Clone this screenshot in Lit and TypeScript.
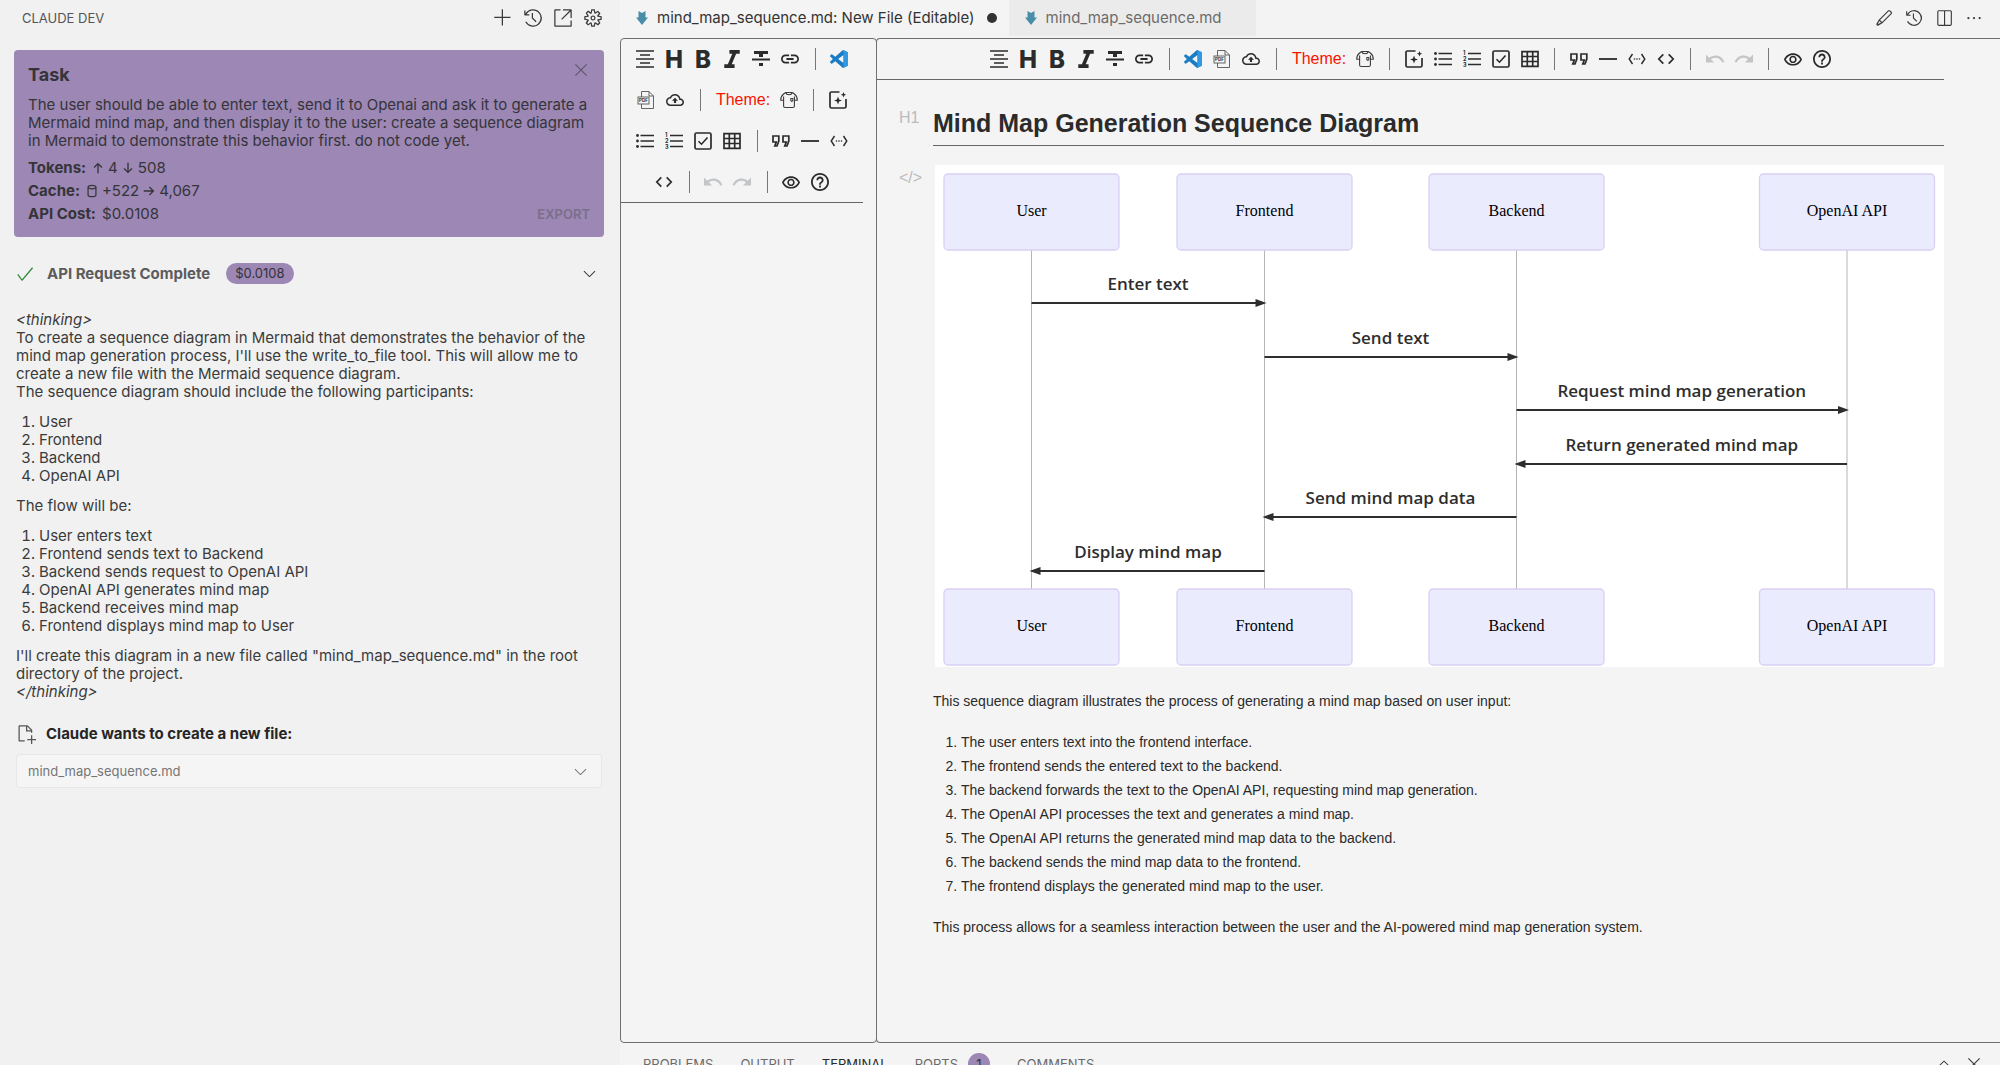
import { LitElement, html, svg, css, nothing } from "lit";
import type { SVGTemplateResult, TemplateResult } from "lit";
import { customElement, property } from "lit/decorators.js";
import { classMap } from "lit/directives/class-map.js";

/* ---------- icons ---------- */

const icon = (
  box: string,
  body: SVGTemplateResult,
  cls = "icon"
): TemplateResult => html`<svg class=${cls} viewBox=${box} aria-hidden="true" fill="currentColor">${body}</svg>`;

const glyph = (d: string) => svg`<path fill-rule="evenodd" d=${d} />`;
const line = (d: string, w = 1) =>
  svg`<path d=${d} fill="none" stroke="currentColor" stroke-width=${w} />`;

const codicons = {
  add: glyph("M14 7v1H8v6H7V8H1V7h6V1h1v6h6z"),
  history: glyph(
    "M13.507 12.324a7 7 0 0 0 .065-8.56A7 7 0 0 0 2 4.393V2H1v3.5l.5.5H5V5H2.811a6.008 6.008 0 1 1-.135 5.77l-.887.462a7 7 0 0 0 11.718 1.092zm-3.361-.97l.708-.707L8 7.792V4H7v4l.146.354 3 3z"
  ),
  external: glyph(
    "M1.5 1H6v1H2v12h12v-4h1v4.5l-.5.5h-13l-.5-.5v-13l.5-.5zM15 1.5V8h-1V2.707L7.243 9.465l-.707-.708L13.293 2H8V1h6.5l.5.5z"
  ),
  gear: glyph(
    "M9.1 4.4L8.6 2H7.4l-.5 2.4-.7.3-2-1.3-.9.8 1.3 2-.2.7-2.4.5v1.2l2.4.5.3.8-1.3 2 .8.8 2-1.3.8.3.4 2.3h1.2l.5-2.4.8-.3 2 1.3.8-.8-1.3-2 .3-.8 2.3-.4V7.4l-2.4-.5-.3-.8 1.3-2-.8-.8-2 1.3-.7-.2zM9.4 1l.5 2.4L12 2.1l2 2-1.4 2.1 2.4.4v2.8l-2.4.5L14 12l-2 2-2.1-1.4-.5 2.4H6.6l-.5-2.4L4 13.9l-2-2 1.4-2.1L1 9.4V6.6l2.4-.5L2.1 4l2-2 2.1 1.4.4-2.4h2.8zm.6 7c0 1.1-.9 2-2 2s-2-.9-2-2 .9-2 2-2 2 .9 2 2zM8 9c.6 0 1-.4 1-1s-.4-1-1-1-1 .4-1 1 .4 1 1 1z"
  ),
  close: line("M3 3l10 10M13 3L3 13", 1),
  check: glyph(
    "M14.431 3.323l-8.47 10-.79-.036-3.35-4.77.818-.574 2.978 4.24 8.051-9.506.764.646z"
  ),
  down: glyph(
    "M7.976 10.072l4.357-4.357.62.618L8.284 11h-.618L3 6.333l.619-.618 4.357 4.357z"
  ),
  up: glyph(
    "M8.024 5.928l-4.357 4.357-.62-.618L7.716 5h.618L13 9.667l-.619.618-4.357-4.357z"
  ),
  newFile: glyph(
    "M9.5 1.1l3.4 3.5.1.4v2h-1V6H8V2H3v11h4v1H2.5l-.5-.5v-12l.5-.5h6.7l.3.1zM9 2v3h2.9L9 2zm4 14h-1v-3H9v-1h3V9h1v3h3v1h-3v3z"
  ),
  edit: glyph(
    "M13.23 1h-1.46L3.52 9.25l-.16.22L1 13.59 2.41 15l4.12-2.36.22-.16L15 4.23V2.77L13.23 1zM2.41 13.59l1.51-3 1.45 1.45-2.96 1.55zm3.83-2.06L4.47 9.76l8-8 1.77 1.77-8 8z"
  ),
  split: glyph("M14 1H3L2 2v12l1 1h11l1-1V2l-1-1zM8 14H3V2h5v12zm6 0H9V2h5v12z"),
  more: svg`<circle cx="3" cy="8" r="1" /><circle cx="8" cy="8" r="1" /><circle cx="13" cy="8" r="1" />`,
  arrowUp: line("M8 14V3M3.5 7.5L8 3l4.5 4.5", 1.5),
  arrowDown: line("M8 2v11M3.5 8.5L8 13l4.5-4.5", 1.5),
  arrowRight: line("M2 8h11M8.5 3.5L13 8l-4.5 4.5", 1.5),
  database: svg`<path d="M3.5 4v8.5c0 1.1 1.6 2 4.5 2s4.5-.9 4.5-2V4" fill="none" stroke="currentColor" stroke-width="1.4" /><ellipse cx="8" cy="3.5" rx="4.5" ry="2" fill="none" stroke="currentColor" stroke-width="1.4" />`,
};

const codicon = (name: keyof typeof codicons, cls = "icon") =>
  icon("0 0 16 16", codicons[name], cls);

const markdownIcon = icon(
  "0 0 12 14",
  svg`<path d="M2.5 0L6 2 9.500 0V6.500H12L6 14 0 6.500H2.500z" />`,
  "file-icon"
);

const tools: Record<string, { label: string; box: string; body: SVGTemplateResult }> = {
  outline: {
    label: "Outline",
    box: "0 0 18 18",
    body: line("M0 1h18M4 5h10M0 9h18M4 13h10M0 17h18", 1.7),
  },
  heading: {
    label: "Headings",
    box: "0 0 18 18",
    body: svg`<text x="9" y="17.5" text-anchor="middle" font-family="Inter, sans-serif" font-weight="800" font-size="24">H</text>`,
  },
  bold: {
    label: "Bold",
    box: "0 0 18 18",
    body: svg`<text x="9" y="17.5" text-anchor="middle" font-family="Inter, sans-serif" font-weight="800" font-size="24">B</text>`,
  },
  italic: {
    label: "Italic",
    box: "5 4 14 14",
    body: glyph("M10 4v3h2.21l-3.42 8H6v3h8v-3h-2.21l3.42-8H18V4z"),
  },
  strike: {
    label: "Strike",
    box: "3 3 18 18",
    body: glyph("M10 19h4v-3h-4v3zM5 4v3h5v3h4V7h5V4H5zM3 13.5h18v-2H3v2z"),
  },
  link: {
    label: "Link",
    box: "2 2 20 20",
    body: glyph(
      "M3.9 12c0-1.71 1.39-3.1 3.1-3.1h4V7H7c-2.76 0-5 2.24-5 5s2.24 5 5 5h4v-1.9H7c-1.71 0-3.1-1.39-3.1-3.1zM8 13h8v-2H8v2zm9-6h-4v1.9h4c1.71 0 3.1 1.39 3.1 3.1s-1.39 3.1-3.1 3.1h-4V17h4c2.76 0 5-2.24 5-5s-2.24-5-5-5z"
    ),
  },
  vscode: {
    label: "Open in VS Code",
    box: "0 0 24 24",
    body: svg`<path fill="#1a7cc4" d="M23.15 2.587L18.21.21a1.494 1.494 0 0 0-1.705.29l-9.46 8.63-4.12-3.128a.999.999 0 0 0-1.276.057L.327 7.261A1 1 0 0 0 .326 8.74L3.899 12 .326 15.26a1 1 0 0 0 .001 1.479L1.65 17.94a.999.999 0 0 0 1.276.057l4.12-3.128 9.46 8.63a1.492 1.492 0 0 0 1.704.29l4.942-2.377A1.5 1.5 0 0 0 24 20.06V3.939a1.5 1.5 0 0 0-.85-1.352zm-5.146 14.861L10.826 12l7.178-5.448v10.896z" /><path fill="#2f9ae3" d="M18 .2l5.15 2.387A1.5 1.5 0 0 1 24 3.939V20.06a1.5 1.5 0 0 1-.85 1.352L18 23.8z" />`,
  },
  pdf: {
    label: "Export PDF",
    box: "0 0 18 18",
    body: svg`<path d="M4.5 6V.5H12L16.5 5v12.5h-12V13M12 .5V5h4.5" fill="none" stroke="#555" stroke-width=".9" /><rect x="1" y="6" width="11" height="7" fill="none" stroke="#555" stroke-width=".9" /><text x="6.5" y="11.3" text-anchor="middle" font-family="Inter, sans-serif" font-weight="700" font-size="4.5">PDF</text>`,
  },
  upload: {
    label: "Upload",
    box: "0 0 24 24",
    body: glyph(
      "M19.35 10.04C18.67 6.59 15.64 4 12 4 9.11 4 6.6 5.64 5.35 8.04 2.34 8.36 0 10.91 0 14c0 3.31 2.69 6 6 6h13c2.76 0 5-2.24 5-5 0-2.64-2.05-4.78-4.65-4.96zM19 18H6c-2.21 0-4-1.79-4-4 0-2.05 1.53-3.76 3.56-3.97l1.07-.11.5-.95C8.08 7.14 9.94 6 12 6c2.62 0 4.88 1.86 5.39 4.43l.3 1.5 1.53.11c1.56.1 2.78 1.41 2.78 2.96 0 1.65-1.35 3-3 3zM8 13h2.55v3h2.9v-3H16l-4-4z"
    ),
  },
  theme: {
    label: "Choose theme",
    box: "0 0 18 18",
    body: svg`<path d="M5.6 1.5h6.8M5.6 1.5L3.6 3C1.6 4.500.7 6.500.7 9.300h2.900M12.400 1.500l2 1.500c2 1.500 2.900 3.500 2.900 6.300h-2.900M3.600 5.500V15q0 1.500 1.500 1.500h7.800q1.500 0 1.500-1.500V5.500M5.800 1.700c.700 2.800 5.700 2.800 6.400 0" fill="none" stroke="#3c3c3c" stroke-width="1.100" /><path d="M10.300 7h3v3l-1.500 1-1.500-1zM11.300 8v1.500h1V8z" fill="#3c3c3c" fill-rule="evenodd" />`,
  },
  sparkle: {
    label: "AI assist",
    box: "0 0 18 18",
    body: svg`<path d="M10.5 1H2.5C1.600 1 1 1.600 1 2.500v13c0 .900.600 1.500 1.500 1.500h13c.900 0 1.500-.600 1.500-1.500V8" fill="none" stroke="currentColor" stroke-width="1.7" /><path d="M9 5.500l1.100 3 2.900 1-2.900 1-1.100 3-1.100-3-2.900-1 2.900-1zM14.500 1l.800 2 1.900.800-1.900.800-.800 2-.800-2-1.900-.800 1.900-.800z" />`,
  },
  bullets: {
    label: "List",
    box: "0 0 18 18",
    body: svg`<circle cx="1.5" cy="3.5" r="1.4" /><circle cx="1.5" cy="9" r="1.4" /><circle cx="1.5" cy="14.5" r="1.4" />${line("M4.5 3.5H18M4.5 9H18M4.5 14.5H18", 1.7)}`,
  },
  numbers: {
    label: "Ordered list",
    box: "0 0 18 18",
    body: svg`${line("M5 3.5H18M5 9H18M5 14.5H18", 1.7)}<g font-family="Inter, sans-serif" font-weight="700" font-size="5.5"><text x="0" y="5">1</text><text x="0" y="11">2</text><text x="0" y="17">3</text></g>`,
  },
  task: {
    label: "Task list",
    box: "0 0 18 18",
    body: svg`<rect x="1" y="1" width="16" height="16" rx="1.5" fill="none" stroke="currentColor" stroke-width="1.7" />${line("M4.5 9.2l3 3 6-6.7", 1.6)}`,
  },
  table: {
    label: "Table",
    box: "0 0 18 18",
    body: line("M1 1.700h16v14.600H1zM1 6.500h16M1 11.500h16M6.300 1.700v14.600M11.700 1.700v14.600", 1.7),
  },
  quote: {
    label: "Quote",
    box: "0 0 18 18",
    body: line(
      "M1 4h5.800v5.200L5 14H2.800l1.500-4H1zM11 4h5.800v5.200L15 14h-2.200l1.500-4H11z",
      1.7
    ),
  },
  rule: { label: "Line", box: "0 0 18 18", body: line("M0 9h18", 1.8) },
  codeBlock: {
    label: "Code block",
    box: "0 0 18 18",
    body: svg`${line("M4.5 4L1.2 9l3.3 5M13.5 4l3.3 5-3.3 5", 1.4)}<circle cx="6.5" cy="9" r=".8" /><circle cx="9" cy="9" r=".8" /><circle cx="11.5" cy="9" r=".8" />`,
  },
  inlineCode: {
    label: "Inline code",
    box: "0 0 18 18",
    body: line("M6.3 4.3L1.8 9l4.5 4.7M11.7 4.3L16.2 9l-4.5 4.7", 1.7),
  },
  undo: {
    label: "Undo",
    box: "2 2 20 20",
    body: glyph(
      "M12.5 8c-2.65 0-5.05.99-6.9 2.6L2 7v9h9l-3.62-3.62c1.39-1.16 3.16-1.88 5.12-1.88 3.54 0 6.55 2.31 7.6 5.5l2.37-.78C21.08 11.03 17.15 8 12.5 8z"
    ),
  },
  redo: {
    label: "Redo",
    box: "2 2 20 20",
    body: glyph(
      "M18.4 10.6C16.55 8.99 14.15 8 11.5 8c-4.65 0-8.58 3.03-9.96 7.22L3.9 16c1.05-3.19 4.05-5.5 7.6-5.5 1.95 0 3.73.72 5.12 1.88L13 16h9V7l-3.6 3.6z"
    ),
  },
  preview: {
    label: "Preview",
    box: "1 0 22 22",
    body: glyph(
      "M12 6c3.79 0 7.17 2.13 8.82 5.5C19.17 14.87 15.79 17 12 17s-7.17-2.13-8.82-5.5C4.83 8.13 8.21 6 12 6m0-2C7 4 2.73 7.11 1 11.5 2.73 15.89 7 19 12 19s9.27-3.11 11-7.5C21.27 7.11 17 4 12 4zm0 5c1.38 0 2.5 1.12 2.5 2.5S13.38 14 12 14s-2.5-1.12-2.5-2.5S10.62 9 12 9m0-2c-2.48 0-4.5 2.02-4.5 4.5S9.52 16 12 16s4.5-2.02 4.5-4.5S14.48 7 12 7z"
    ),
  },
  help: {
    label: "Help",
    box: "2 2 20 20",
    body: glyph(
      "M11 18h2v-2h-2v2zm1-16C6.48 2 2 6.48 2 12s4.48 10 10 10 10-4.48 10-10S17.52 2 12 2zm0 18c-4.41 0-8-3.59-8-8s3.59-8 8-8 8 3.59 8 8-3.59 8-8 8zm0-14c-2.21 0-4 1.79-4 4h2c0-1.1.9-2 2-2s2 .9 2 2c0 2-3 1.75-3 5h2c0-2.25 3-2.5 3-5 0-2.21-1.79-4-4-4z"
    ),
  },
};

const toolOrder = [
  "outline", "heading", "bold", "italic", "strike", "link", "|",
  "vscode", "pdf", "upload", "|",
  "Theme:", "theme", "|",
  "sparkle", "bullets", "numbers", "task", "table", "|",
  "quote", "rule", "codeBlock", "inlineCode", "|",
  "undo", "redo", "|",
  "preview", "help",
];

const reset = css`
  *, *::before, *::after { box-sizing: border-box; }
  button {
    display: inline-flex;
    align-items: center;
    justify-content: center;
    margin: 0;
    padding: 0;
    border: 0;
    background: none;
    color: inherit;
    font: inherit;
  }
  svg { display: block; flex: none; }
  h1, h2, p, ol { margin: 0; }
`;

/* ---------- formatting toolbar ---------- */

@customElement("format-toolbar")
export class FormatToolbar extends LitElement {
  static styles = [
    reset,
    css`
      :host {
        display: flex;
        flex-wrap: wrap;
        justify-content: center;
        align-items: center;
        row-gap: 1px;
        border-bottom: 1px solid #666;
        color: #2b2b2b;
        font-family: "Liberation Sans", Arial, sans-serif;
      }
      .tool { width: 29px; height: 40px; }
      .tool:disabled { color: #c3c5c7; }
      .icon { width: 18px; height: 18px; overflow: visible; }
      .sep { width: 1px; height: 22px; margin: 0 9px 0 10px; background: #777; }
      .label { padding: 0 4px 0 6px; color: #f51300; font-size: 16px; line-height: 40px; }
    `,
  ];

  render() {
    return toolOrder.map((name) => {
      if (name === "|") return html`<span class="sep"></span>`;
      const tool = tools[name];
      if (!tool) return html`<span class="label">${name}</span>`;
      const off = name === "undo" || name === "redo";
      return html`<button class="tool" aria-label=${tool.label} ?disabled=${off}>
        ${icon(tool.box, tool.body)}
      </button>`;
    });
  }
}

/* ---------- sequence diagram ---------- */

interface Message { from: number; to: number; text: string }

@customElement("sequence-diagram")
export class SequenceDiagram extends LitElement {
  @property({ attribute: false }) actors: { name: string; x: number }[] = [];
  @property({ attribute: false }) messages: Message[] = [];

  static styles = css`
    :host { display: block; background: #fff; }
    .canvas { display: block; width: 100%; height: auto; }
    .actor { fill: #ebebfe; stroke: #dacff3; stroke-width: 1.3; }
    .actor-name { font: 16px "Liberation Serif", "Times New Roman", serif; fill: #000; text-anchor: middle; }
    .life { stroke: #b5b5b5; stroke-width: 1; }
    .arrow { stroke: #2e2e2e; stroke-width: 2; }
    .head { fill: #2e2e2e; }
    .message { font: 600 17px "Open Sans", "Noto Sans", sans-serif; fill: #2e2e2e; text-anchor: middle; }
  `;

  private box(name: string, x: number, y: number) {
    return svg`<rect class="actor" x=${x - 87.5} y=${y} width="175" height="76" rx="4" />
      <text class="actor-name" x=${x} y=${y + 42}>${name}</text>`;
  }

  private arrow(m: Message, i: number) {
    const a = this.actors[m.from].x;
    const b = this.actors[m.to].x;
    const y = 138 + Math.round(i * 53.5);
    const dir = Math.sign(b - a);
    return svg`<line class="arrow" x1=${a} x2=${b - dir * 6} y1=${y} y2=${y} />
      <path class="head" d="M${b + dir * 2} ${y}L${b - dir * 9} ${y - 4}V${y + 4}z" />
      <text class="message" x=${(a + b) / 2} y=${y - 13}>${m.text}</text>`;
  }

  render() {
    return html`<svg class="canvas" viewBox="0 0 1009 502" role="img" aria-label="Sequence diagram">
      ${this.actors.map((a) => svg`<line class="life" x1=${a.x} x2=${a.x} y1="84" y2="424" />`)}
      ${this.actors.map((a) => [this.box(a.name, a.x, 9), this.box(a.name, a.x, 424)])}
      ${this.messages.map((m, i) => this.arrow(m, i))}
    </svg>`;
  }
}

/* ---------- assistant sidebar ---------- */

@customElement("assistant-sidebar")
export class AssistantSidebar extends LitElement {
  static styles = [
    reset,
    css`
      :host {
        display: block;
        background: #f1f1f1;
        color: #3b3b3b;
        font: 15px/18px Inter, "Liberation Sans", sans-serif;
      }
      .head {
        display: flex;
        align-items: center;
        justify-content: space-between;
        height: 35px;
        padding: 0 17px 0 22px;
        color: #555;
        font-size: 13px;
      }
      .head h2 { font-size: 13px; font-weight: 400; }
      .actions { display: flex; gap: 10px; color: #3b3b3b; }
      .icon { width: 20px; height: 20px; }
      .chevron { width: 19px; height: 19px; }
      .inline { width: 14px; height: 14px; }
      .cross { width: 18px; height: 18px; }
      .body { padding: 15px 16px 0 14px; }
      .task {
        padding: 14px;
        border-radius: 4px;
        background: #9c87b5;
        color: #353438;
      }
      .row { display: flex; align-items: center; }
      .spread { justify-content: space-between; }
      .task h2 { font-size: 18px; line-height: 22px; font-weight: 700; }
      .close { height: 12px; align-self: flex-start; color: #5f5669; }
      .task-text { margin: 10px 0 9px; }
      .stats { display: grid; gap: 5px; }
      .stats .row { gap: 3px; height: 18px; }
      .stats strong { margin-right: 2px; }
      .export { color: #7b6f8a; font-size: 13px; font-weight: 600; }
      .status { gap: 12px; height: 21px; margin-top: 26px; padding: 0 5px 0 1px; }
      .status .title { margin-right: 4px; font-weight: 700; color: #5c5c5c; }
      .ok { color: #2f8a35; }
      .badge {
        padding: 0 9px;
        border-radius: 11px;
        background: #9c87b5;
        color: #353438;
        font-size: 13px;
        line-height: 21px;
      }
      .grow { flex: 1; }
      .thinking { display: grid; gap: 12px; margin-top: 27px; padding-left: 2px; }
      .thinking ol { padding-left: 23px; }
      .wants { gap: 10px; height: 20px; margin-top: 23px; padding-left: 2px; color: #262626; font-weight: 700; }
      .wants .icon { color: #555; }
      .file {
        display: flex;
        width: calc(100% - 4px);
        justify-content: space-between;
        height: 34px;
        margin: 10px 0 0 2px;
        padding: 0 11px;
        border: 1px solid #e7e7e7;
        border-radius: 3px;
        background: #f5f5f5;
        color: #767676;
        font-size: 13px;
      }
    `,
  ];

  render() {
    const participants = ["User", "Frontend", "Backend", "OpenAI API"];
    const flow = [
      "User enters text",
      "Frontend sends text to Backend",
      "Backend sends request to OpenAI API",
      "OpenAI API generates mind map",
      "Backend receives mind map",
      "Frontend displays mind map to User",
    ];
    const list = (items: string[]) => html`<ol>${items.map((t) => html`<li>${t}</li>`)}</ol>`;
    return html`
      <header class="head">
        <h2>CLAUDE DEV</h2>
        <div class="actions">
          <button aria-label="New task">${codicon("add")}</button>
          <button aria-label="History">${codicon("history")}</button>
          <button aria-label="Open in editor">${codicon("external")}</button>
          <button aria-label="Settings">${codicon("gear")}</button>
        </div>
      </header>
      <div class="body">
        <section class="task">
          <div class="row spread">
            <h2>Task</h2>
            <button class="close" aria-label="Close task">${codicon("close", "cross")}</button>
          </div>
          <p class="task-text">
            The user should be able to enter text, send it to Openai and ask it to generate a
            Mermaid mind map, and then display it to the user: create a sequence diagram in
            Mermaid to demonstrate this behavior first. do not code yet.
          </p>
          <div class="stats">
            <div class="row">
              <strong>Tokens:</strong>${codicon("arrowUp", "inline")}<span>4</span>
              ${codicon("arrowDown", "inline")}<span>508</span>
            </div>
            <div class="row">
              <strong>Cache:</strong>${codicon("database", "inline")}<span>+522</span>
              ${codicon("arrowRight", "inline")}<span>4,067</span>
            </div>
            <div class="row spread">
              <span><strong>API Cost:</strong> $0.0108</span>
              <button class="export">EXPORT</button>
            </div>
          </div>
        </section>
        <div class="row status">
          ${codicon("check", "icon ok")}
          <span class="title">API Request Complete</span>
          <span class="badge">$0.0108</span>
          <span class="grow"></span>
          <button aria-label="Expand request">${codicon("down", "chevron")}</button>
        </div>
        <section class="thinking">
          <p>
            <em>&lt;thinking&gt;</em><br />
            To create a sequence diagram in Mermaid that demonstrates the behavior of the mind map
            generation process, I'll use the write_to_file tool. This will allow me to create a new
            file with the Mermaid sequence diagram.<br />
            The sequence diagram should include the following participants:
          </p>
          ${list(participants)}
          <p>The flow will be:</p>
          ${list(flow)}
          <p>
            I'll create this diagram in a new file called "mind_map_sequence.md" in the root
            directory of the project.<br /><em>&lt;/thinking&gt;</em>
          </p>
        </section>
        <div class="row wants">${codicon("newFile")}<span>Claude wants to create a new file:</span></div>
        <button class="file" aria-expanded="false">
          <span>mind_map_sequence.md</span>${codicon("down", "chevron")}
        </button>
      </div>
    `;
  }
}

/* ---------- page ---------- */

@customElement("app-root")
export class AppRoot extends LitElement {
  static styles = [
    reset,
    css`
      :host {
        display: grid;
        grid-template-columns: 31% minmax(0, 1fr);
        height: 100vh;
        overflow: hidden;
        background: #f4f4f4;
        color: #2b2b2b;
        font: 15px/18px Inter, "Liberation Sans", sans-serif;
      }
      .main { display: flex; flex-direction: column; min-width: 0; min-height: 0; }
      .tabs { display: flex; height: 38px; flex: none; background: #f3f3f3; }
      .tab {
        display: flex;
        align-items: center;
        gap: 9px;
        height: 36px;
        padding: 0 34px 0 16px;
        background: #ebebeb;
        color: #6b6b6b;
      }
      .tab.active { padding: 0 12px 0 16px; background: #f4f4f4; color: #333; }
      .file-icon { width: 12px; height: 14px; color: #4a8da8; }
      .dot { width: 10px; height: 10px; margin-left: 3px; border-radius: 50%; background: #333; }
      .actions {
        display: flex;
        align-items: center;
        gap: 12px;
        height: 35px;
        margin-left: auto;
        padding-right: 17px;
        color: #3b3b3b;
      }
      .icon { width: 18px; height: 18px; }
      .panes { display: grid; grid-template-columns: 257px minmax(0, 1fr); flex: 1; min-height: 0; }
      .pane { border: 1px solid #707070; border-radius: 4px; min-width: 0; padding-right: 13px; }
      .preview { border-right: 0; border-radius: 4px 0 0 4px; padding-right: 56px; margin-left: -1px; }
      .document {
        display: grid;
        grid-template-columns: 34px minmax(0, 1fr);
        padding: 27px 0 0 22px;
        font: 14px/24px "Liberation Sans", Arial, sans-serif;
      }
      .mark { color: #b9bbbd; font-size: 16px; line-height: 22px; }
      .title {
        padding-bottom: 6px;
        border-bottom: 1px solid #666;
        font-size: 25px;
        line-height: 32px;
        font-weight: 700;
      }
      .code-mark { padding-top: 21px; }
      .diagram { margin: 19px 0 0 2px; }
      .prose { grid-column: 2; display: grid; gap: 17px; margin-top: 22px; }
      .prose ol { padding-left: 28px; }
      .bottom {
        display: flex;
        flex: none;
        align-items: flex-start;
        gap: 27px;
        height: 22px;
        padding: 12px 0 0 23px;
        color: #6b6b6b;
        font-size: 13px;
      }
      .bottom button { height: 18px; white-space: nowrap; }
      .bottom .current { color: #2b2b2b; }
      .bottom .actions { height: 18px; }
      .count {
        width: 22px;
        margin-left: 10px;
        border-radius: 11px;
        background: #9c87b5;
        color: #353438;
        line-height: 22px;
      }
    `,
  ];

  private actors = [
    { name: "User", x: 96.5 },
    { name: "Frontend", x: 329.5 },
    { name: "Backend", x: 581.5 },
    { name: "OpenAI API", x: 912 },
  ];

  private messages: Message[] = [
    { from: 0, to: 1, text: "Enter text" },
    { from: 1, to: 2, text: "Send text" },
    { from: 2, to: 3, text: "Request mind map generation" },
    { from: 3, to: 2, text: "Return generated mind map" },
    { from: 2, to: 1, text: "Send mind map data" },
    { from: 1, to: 0, text: "Display mind map" },
  ];

  private steps = [
    "The user enters text into the frontend interface.",
    "The frontend sends the entered text to the backend.",
    "The backend forwards the text to the OpenAI API, requesting mind map generation.",
    "The OpenAI API processes the text and generates a mind map.",
    "The OpenAI API returns the generated mind map data to the backend.",
    "The backend sends the mind map data to the frontend.",
    "The frontend displays the generated mind map to the user.",
  ];

  private panels = ["PROBLEMS", "OUTPUT", "TERMINAL", "PORTS", "COMMENTS"];

  render() {
    return html`
      <assistant-sidebar></assistant-sidebar>
      <main class="main">
        <nav class="tabs">
          <button class="tab active">
            ${markdownIcon}<span>mind_map_sequence.md: New File (Editable)</span><span class="dot"></span>
          </button>
          <button class="tab">${markdownIcon}<span>mind_map_sequence.md</span></button>
          <div class="actions">
            <button aria-label="Edit">${codicon("edit")}</button>
            <button aria-label="Timeline">${codicon("history")}</button>
            <button aria-label="Split editor">${codicon("split")}</button>
            <button aria-label="More actions">${codicon("more")}</button>
          </div>
        </nav>
        <div class="panes">
          <section class="pane"><format-toolbar></format-toolbar></section>
          <section class="pane preview">
            <format-toolbar></format-toolbar>
            <article class="document">
              <span class="mark">H1</span>
              <h1 class="title">Mind Map Generation Sequence Diagram</h1>
              <span class="mark code-mark">&lt;/&gt;</span>
              <sequence-diagram
                class="diagram"
                .actors=${this.actors}
                .messages=${this.messages}
              ></sequence-diagram>
              <div class="prose">
                <p>This sequence diagram illustrates the process of generating a mind map based on user input:</p>
                <ol>${this.steps.map((s) => html`<li>${s}</li>`)}</ol>
                <p>This process allows for a seamless interaction between the user and the AI-powered mind map generation system.</p>
              </div>
            </article>
          </section>
        </div>
        <footer class="bottom">
          ${this.panels.map(
            (name) => html`<button class=${classMap({ current: name === "TERMINAL" })}>
              ${name}${name === "PORTS" ? html`<span class="count">1</span>` : nothing}
            </button>`
          )}
          <div class="actions">
            <button aria-label="Maximize panel">${codicon("up")}</button>
            <button aria-label="Close panel">${codicon("close")}</button>
          </div>
        </footer>
      </main>
    `;
  }
}
